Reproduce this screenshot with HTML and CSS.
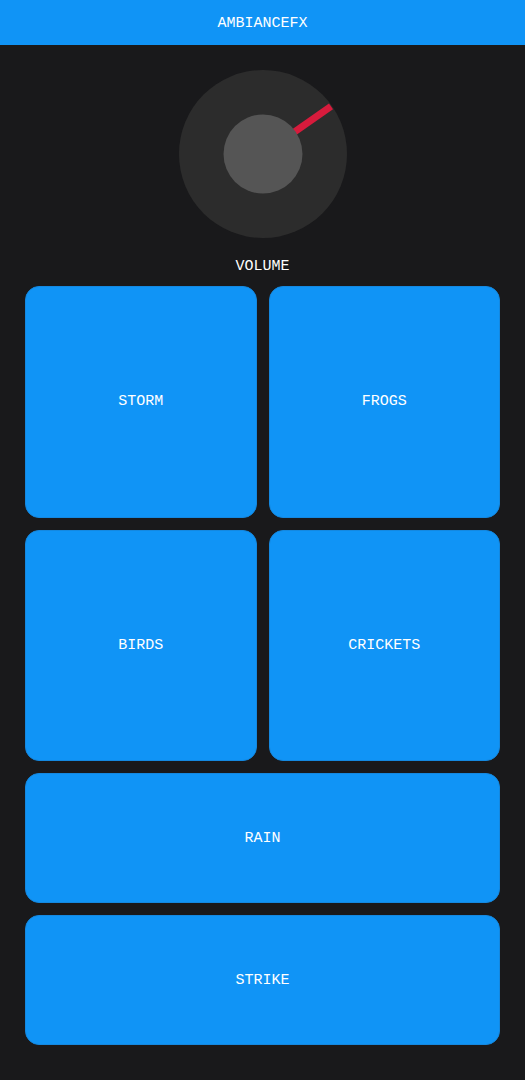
FILE: index.html
```html
<!DOCTYPE html>
<html>
<head>
<meta charset="utf-8">
<link rel="stylesheet" href="styles.css">
</head>
<body>
<header class="topbar">AMBIANCEFX</header>
<main class="content">
  <section class="volume">
    <svg class="knob" width="168" height="168" viewBox="0 0 168 168">
      <circle cx="84" cy="84" r="84" fill="#2c2c2c"/>
      <line x1="112" y1="64.4" x2="152" y2="36.4" stroke="#d71b3c" stroke-width="7"/>
      <circle cx="84" cy="84" r="39.5" fill="#555555"/>
    </svg>
    <div class="volume-label">VOLUME</div>
  </section>
  <section class="pads">
    <button class="pad square">STORM</button>
    <button class="pad square">FROGS</button>
    <button class="pad square">BIRDS</button>
    <button class="pad square">CRICKETS</button>
    <button class="pad wide">RAIN</button>
    <button class="pad wide">STRIKE</button>
  </section>
</main>
</body>
</html>
```
FILE: styles.css
```css
html, body {
  margin: 0;
  padding: 0;
}
body {
  background: #19191b;
  color: #ffffff;
  font-family: "Liberation Mono", "DejaVu Sans Mono", monospace;
  font-size: 15px;
  width: 525px;
  min-height: 1080px;
}
.topbar {
  height: 45px;
  background: #1094f6;
  display: flex;
  align-items: center;
  justify-content: center;
  color: #ffffff;
  font-size: 15px;
  padding-top: 1px;
  box-sizing: border-box;
}
.content {
  padding: 25px 25px 0 25px;
}
.volume {
  display: flex;
  flex-direction: column;
  align-items: center;
}
.knob {
  display: block;
}
.volume-label {
  margin-top: 21px;
  line-height: 16px;
  height: 16px;
}
.pads {
  margin-top: 11px;
  display: grid;
  grid-template-columns: 1fr 1fr;
  gap: 12px;
}
.pad {
  background: #1094f6;
  color: #ffffff;
  border: 1px solid #1488e0;
  border-radius: 14px;
  font-family: "Liberation Mono", "DejaVu Sans Mono", monospace;
  font-size: 15px;
  padding: 0;
  margin: 0;
  display: flex;
  align-items: center;
  justify-content: center;
}
.square {
  aspect-ratio: 1 / 1;
}
.wide {
  grid-column: span 2;
  height: 130px;
}
```
